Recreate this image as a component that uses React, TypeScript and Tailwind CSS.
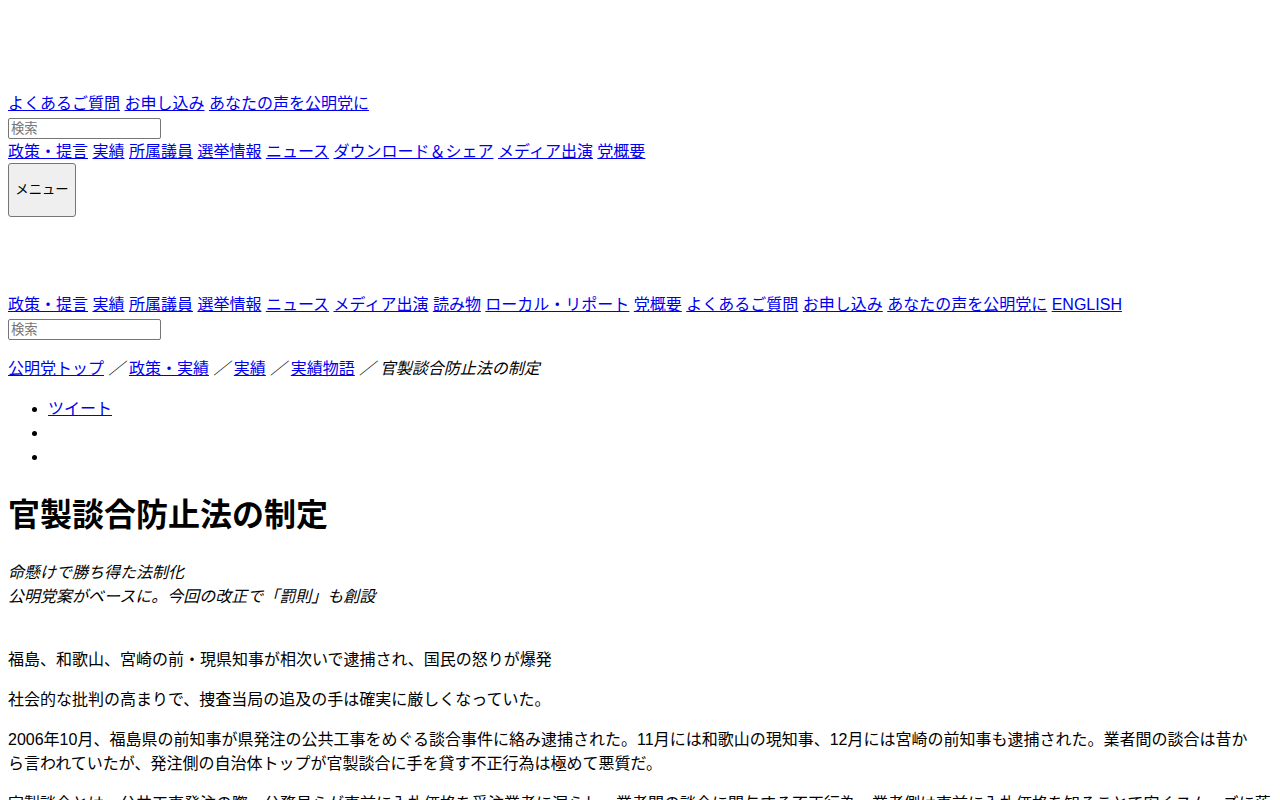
import React from 'react';

const utilityLinks = ['よくあるご質問', 'お申し込み', 'あなたの声を公明党に'];
const headerNav = ['政策・提言', '実績', '所属議員', '選挙情報', 'ニュース', 'ダウンロード＆シェア', 'メディア出演', '党概要'];
const globalNav = [
  '政策・提言',
  '実績',
  '所属議員',
  '選挙情報',
  'ニュース',
  'メディア出演',
  '読み物',
  'ローカル・リポート',
  '党概要',
  'よくあるご質問',
  'お申し込み',
  'あなたの声を公明党に',
  'ENGLISH',
];
const crumbs = ['公明党トップ', '政策・実績', '実績', '実績物語'];

const LinkRow: React.FC<{ items: string[] }> = ({ items }) => (
  <div className="leading-[23px]">
    {items.map((label, i) => (
      <React.Fragment key={label + i}>
        <a href="#" className="text-[#0000ee] underline">
          {label}
        </a>
        {i < items.length - 1 ? ' ' : null}
      </React.Fragment>
    ))}
  </div>
);

const SearchBox: React.FC = () => (
  <form className="h-[25px] pt-[3px]">
    <input
      type="text"
      placeholder="検索"
      className="block w-[153px] h-[21px] px-[2px] border border-[#767676] rounded-[2px] bg-white text-[13.33px] placeholder:text-[#757575]"
    />
  </form>
);

export default function App() {
  return (
    <div className="min-h-screen bg-white p-2 text-base text-black font-['Liberation_Sans','Noto_Sans_CJK_JP',sans-serif]">
      {/* header (logo area is empty in the capture) */}
      <header>
        <div className="h-[84px]" />
        <LinkRow items={utilityLinks} />
        <SearchBox />
        <LinkRow items={headerNav} />
        <button
          type="button"
          className="block w-[68px] h-[54px] bg-[#efefef] border border-[#767676] rounded-[3px] text-[13.33px] text-black"
        >
          メニュー
        </button>
      </header>

      {/* global nav */}
      <nav className="mt-[76px]">
        <LinkRow items={globalNav} />
        <SearchBox />
      </nav>

      {/* breadcrumb */}
      <p className="mt-4 leading-[23px]">
        {crumbs.map((c) => (
          <React.Fragment key={c}>
            <a href="#" className="text-[#0000ee] underline">
              {c}
            </a>
            <span className="italic">{' ／ '}</span>
          </React.Fragment>
        ))}
        <em>官製談合防止法の制定</em>
      </p>

      <ul className="mt-[17px] mb-4 pl-10 list-disc">
        <li className="leading-6">
          <a href="#" className="text-[#0000ee] underline">
            ツイート
          </a>
        </li>
        <li className="leading-6 h-6" />
        <li className="leading-6 h-6" />
      </ul>

      <article>
        <h1 className="mt-[22px] text-[32px] font-bold leading-[48px]">官製談合防止法の制定</h1>
        <p className="mt-[22px] italic leading-6">
          命懸けで勝ち得た法制化
          <br />
          公明党案がベースに。今回の改正で「罰則」も創設
        </p>

        <div className="mt-[39px] leading-[23.2px]">
          <p className="mb-[17px]">福島、和歌山、宮崎の前・現県知事が相次いで逮捕され、国民の怒りが爆発</p>
          <p className="mb-[17px]">社会的な批判の高まりで、捜査当局の追及の手は確実に厳しくなっていた。</p>
          <p className="mb-[17px] pr-3">
            2006年10月、福島県の前知事が県発注の公共工事をめぐる談合事件に絡み逮捕された。11月には和歌山の現知事、12月には宮崎の前知事も逮捕された。業者間の談合は昔から言われていたが、発注側の自治体トップが官製談合に手を貸す不正行為は極めて悪質だ。
          </p>
          <p className="mb-[17px]">
            官製談合とは、公共工事発注の際、公務員らが事前に入札価格を受注業者に漏らし、業者間の談合に関与する不正行為。業者側は事前に入札価格を知ることで安くスムーズに落札できるため、税金の無駄遣いにつながる。
          </p>
        </div>
      </article>
    </div>
  );
}
